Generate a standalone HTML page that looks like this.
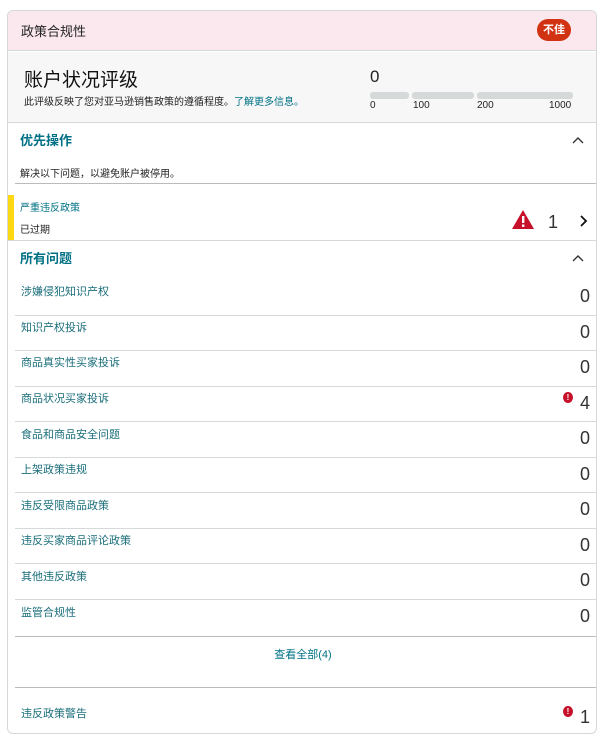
<!DOCTYPE html>
<html><head><meta charset="utf-8"><style>
*{margin:0;padding:0;box-sizing:border-box}
body{width:604px;height:738px;background:#fff;font-family:"Liberation Sans","Noto Sans CJK SC",sans-serif;position:relative;overflow:hidden}
.card{position:absolute;left:7px;top:10px;width:590px;height:724px;border:1px solid #d5d9d9;border-radius:6px;overflow:hidden;background:#fff}
.a{position:absolute;white-space:nowrap}
.teal{color:#007185}
.line{position:absolute;height:1px;background:#d5d9d9}
.num{position:absolute;right:6px;font-size:18px;color:#333;width:20px;text-align:right}
.lbl{position:absolute;left:13px;font-size:11px;color:#1a6e7a}
.dot{position:absolute;width:10px;height:11px;border-radius:50%;background:#c7102a;color:#fff;font-size:8px;font-weight:bold;text-align:center;line-height:11px}
</style></head><body>
<div class="card">
 <div class="a" style="left:0;top:0;width:590px;height:40px;background:#fbe8ee;border-bottom:1px solid #d5d9d9"></div>
 <div class="a" style="left:13px;top:10px;font-size:13px;color:#222">政策合规性</div>
 <div class="a" style="left:529px;top:8px;width:34px;height:22px;border-radius:11px;background:#d13212;color:#fff;font-size:11px;text-align:center;line-height:22px;font-weight:bold">不佳</div>
 <div class="a" style="left:0;top:41px;width:590px;height:71px;background:#f7f7f7;border-bottom:1px solid #d5d9d9"></div>
 <div class="a" style="left:16px;top:54px;font-size:19px;color:#111">账户状况评级</div>
 <div class="a" style="left:16px;top:82px;font-size:10px;color:#222">此评级反映了您对亚马逊销售政策的遵循程度。<span class="teal">了解更多信息。</span></div>
 <div class="a" style="left:362px;top:56px;font-size:17px;color:#222">0</div>
 <div class="a" style="left:362px;top:81px;width:39px;height:7px;border-radius:3px;background:#d5d9d9"></div>
 <div class="a" style="left:404px;top:81px;width:62px;height:7px;border-radius:3px;background:#d5d9d9"></div>
 <div class="a" style="left:469px;top:81px;width:96px;height:7px;border-radius:3px;background:#d5d9d9"></div>
 <div class="a" style="left:362px;top:89px;font-size:10px;color:#222">0</div>
 <div class="a" style="left:405px;top:89px;font-size:10px;color:#222">100</div>
 <div class="a" style="left:469px;top:89px;font-size:10px;color:#222">200</div>
 <div class="a" style="left:541px;top:89px;font-size:10px;color:#222">1000</div>
 <div class="a teal" style="left:12px;top:119px;font-size:13px;font-weight:bold">优先操作</div>
 <svg class="a" style="left:563px;top:124px" width="14" height="10"><path d="M2 8 L7 3 L12 8" fill="none" stroke="#333" stroke-width="1.4"/></svg>
 <div class="a" style="left:12px;top:154px;font-size:10px;color:#222">解决以下问题，以避免账户被停用。</div>
 <div class="line" style="left:7px;top:172px;width:583px;background:#bbb"></div>
 <div class="a" style="left:0;top:184px;width:6px;height:46px;background:#ffd814"></div>
 <div class="a teal" style="left:12px;top:188px;font-size:10px">严重违反政策</div>
 <div class="a" style="left:12px;top:210px;font-size:10px;color:#222">已过期</div>
 <svg class="a" style="left:503px;top:198px" width="24" height="21"><path d="M12 1 L23 20 L1 20 Z" fill="#c7102a"/><rect x="11" y="7" width="2.4" height="7" fill="#fff"/><rect x="11" y="15.5" width="2.4" height="2.4" fill="#fff"/></svg>
 <div class="a" style="left:540px;top:201px;font-size:18px;color:#333">1</div>
 <svg class="a" style="left:571px;top:203px" width="10" height="14"><path d="M2 2 L7 7 L2 12" fill="none" stroke="#111" stroke-width="1.8"/></svg>
 <div class="line" style="left:0;top:229px;width:590px"></div>
 <div class="a teal" style="left:12px;top:237px;font-size:13px;font-weight:bold">所有问题</div>
 <svg class="a" style="left:563px;top:242px" width="14" height="10"><path d="M2 8 L7 3 L12 8" fill="none" stroke="#333" stroke-width="1.4"/></svg>

 <div class="lbl" style="top:272px">涉嫌侵犯知识产权</div><div class="num" style="top:275px">0</div>
 <div class="line" style="left:7px;top:304px;width:583px"></div>
 <div class="lbl" style="top:308px">知识产权投诉</div><div class="num" style="top:311px">0</div>
 <div class="line" style="left:7px;top:339px;width:583px"></div>
 <div class="lbl" style="top:343px">商品真实性买家投诉</div><div class="num" style="top:346px">0</div>
 <div class="line" style="left:7px;top:375px;width:583px"></div>
 <div class="lbl" style="top:379px">商品状况买家投诉</div><div class="dot" style="left:555px;top:381px">!</div><div class="num" style="top:382px">4</div>
 <div class="line" style="left:7px;top:410px;width:583px"></div>
 <div class="lbl" style="top:415px">食品和商品安全问题</div><div class="num" style="top:417px">0</div>
 <div class="line" style="left:7px;top:446px;width:583px"></div>
 <div class="lbl" style="top:450px">上架政策违规</div><div class="num" style="top:453px">0</div>
 <div class="line" style="left:7px;top:481px;width:583px"></div>
 <div class="lbl" style="top:486px">违反受限商品政策</div><div class="num" style="top:488px">0</div>
 <div class="line" style="left:7px;top:517px;width:583px"></div>
 <div class="lbl" style="top:521px">违反买家商品评论政策</div><div class="num" style="top:524px">0</div>
 <div class="line" style="left:7px;top:552px;width:583px"></div>
 <div class="lbl" style="top:557px">其他违反政策</div><div class="num" style="top:559px">0</div>
 <div class="line" style="left:7px;top:588px;width:583px"></div>
 <div class="lbl" style="top:593px">监管合规性</div><div class="num" style="top:595px">0</div>
 <div class="line" style="left:7px;top:625px;width:583px;background:#bbb"></div>
 <div class="a teal" style="left:0;width:590px;text-align:center;top:635px;font-size:11px">查看全部(4)</div>
 <div class="line" style="left:7px;top:676px;width:583px;background:#bbb"></div>
 <div class="lbl" style="top:694px">违反政策警告</div><div class="dot" style="left:555px;top:695px">!</div><div class="num" style="top:696px">1</div>
</div>
</body></html>
